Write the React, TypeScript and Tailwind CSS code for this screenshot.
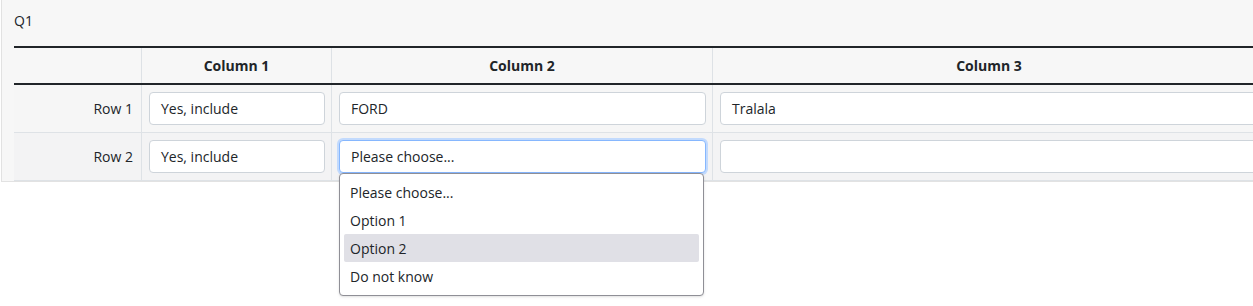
import { ReactNode } from 'react'

const font = { fontFamily: '"Open Sans", "Noto Sans", sans-serif' }

function TextBox({ value, focused, children }: { value: string; focused?: boolean; children?: ReactNode }) {
  return (
    <div className="relative w-full">
      <div
        className={
          focused
            ? 'flex h-[33px] w-full items-center rounded-[4px] border border-[#86b7fe] bg-white px-[11px] ring-2 ring-[#c2dafd]'
            : 'flex h-[33px] w-full items-center rounded-[4px] border border-[#ced4da] bg-white px-[11px]'
        }
      >
        {value}
      </div>
      {children}
    </div>
  )
}

const options = ['Please choose...', 'Option 1', 'Option 2', 'Do not know']

function Dropdown() {
  return (
    <div className="absolute left-0 top-full z-10 w-[365px] rounded-[4px] border border-[#8f8f96] bg-white pb-[5px] pt-[4px] shadow-sm">
      {options.map((o) => (
        <div
          key={o}
          className={
            o === 'Option 2'
              ? 'mx-[4px] flex h-[28px] items-center rounded-[2px] bg-[#e0e0e6] px-[6px]'
              : 'mx-[4px] flex h-[28px] items-center px-[6px]'
          }
        >
          {o}
        </div>
      ))}
    </div>
  )
}

function Row({ label, bg, cells }: { label: string; bg: string; cells: ReactNode[] }) {
  return (
    <div className={`flex h-[48px] border-b border-[#dee2e6] ${bg}`}>
      <div className="flex w-[128px] shrink-0 items-center justify-end border-r border-[#dee2e6] pr-[8px]">{label}</div>
      <div className="flex w-[190px] shrink-0 items-center border-r border-[#dee2e6] pl-[7px] pr-[6px]">{cells[0]}</div>
      <div className="flex w-[381px] shrink-0 items-center border-r border-[#dee2e6] pl-[7px] pr-[6px]">{cells[1]}</div>
      <div className="flex flex-1 items-center pl-[7px] pr-[7px]">{cells[2]}</div>
    </div>
  )
}

export default function App() {
  return (
    <div className="h-[306px] w-full overflow-hidden bg-white text-[14px] text-[#212529]" style={font}>
      <div className="ml-px w-[1264px] shrink-0 border-b border-l border-[#e2e2e2] bg-[#f7f7f7] pl-3 pt-[11px]">
        <div className="mb-[15px] leading-5">Q1</div>
        <div>
          <div className="flex h-[39px] border-y-2 border-[#212529] font-bold">
            <div className="w-[128px] shrink-0 border-r border-[#dee2e6]" />
            <div className="flex w-[190px] shrink-0 items-center justify-center border-r border-[#dee2e6]">Column 1</div>
            <div className="flex w-[381px] shrink-0 items-center justify-center border-r border-[#dee2e6]">Column 2</div>
            <div className="flex flex-1 items-center justify-center">Column 3</div>
          </div>
          <Row
            label="Row 1"
            bg="bg-[#f6f6f6]"
            cells={[<TextBox key="a" value="Yes, include" />, <TextBox key="b" value="FORD" />, <TextBox key="c" value="Tralala" />]}
          />
          <Row
            label="Row 2"
            bg="bg-[#f3f3f4]"
            cells={[
              <TextBox key="a" value="Yes, include" />,
              <TextBox key="b" value="Please choose..." focused>
                <Dropdown />
              </TextBox>,
              <TextBox key="c" value="" />,
            ]}
          />
        </div>
      </div>
    </div>
  )
}
